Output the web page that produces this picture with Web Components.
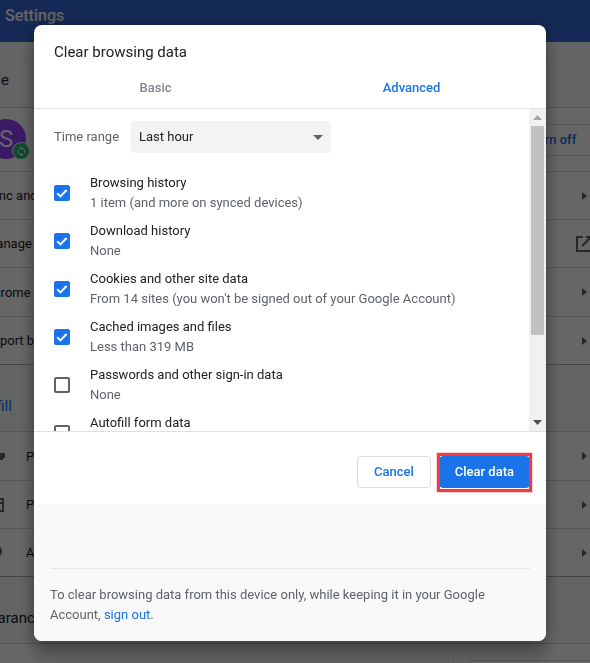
<!DOCTYPE html>
<html>
<head>
<meta charset="utf-8">
<title>Settings</title>
<style>
  html, body { margin: 0; height: 100%; overflow: hidden; background: #f8f9fa; }
  body { font-family: Roboto, "Liberation Sans", sans-serif; font-size: 13px; color: #202124; }
  .turn-off { display: block; width: 89px; padding-left: 16px; height: 30px; line-height: 30px; color: #1a73e8; font-weight: 500; border: 1px solid #dadce0; white-space: nowrap; }
</style>
</head>
<body>
<settings-page>
  <settings-heading style="height:65px">People</settings-heading>
  <settings-row tall>
    <user-avatar slot="icon"></user-avatar>
    <span slot="action" class="turn-off">Turn off</span>
  </settings-row>
  <settings-row arrow>Sync and Google services</settings-row>
  <settings-row external>Manage your Google Account</settings-row>
  <settings-row arrow style="height:49px">Chrome name and picture</settings-row>
  <settings-row arrow>Import bookmarks and settings</settings-row>
  <settings-heading section accent>Autofill</settings-heading>
  <settings-row arrow lead style="height:49px">
    <svg slot="icon" width="20" height="20" viewBox="0 0 20 20"><path fill="#5f6368" d="M11 7h8v5h-2v2h-3v-2h-3a4 4 0 1 1 0-5zM6 8a1.500 1.500 0 1 0 0 3 1.500 1.500 0 0 0 0-3z"/></svg>
    Passwords
  </settings-row>
  <settings-row arrow lead>
    <svg slot="icon" width="20" height="20" viewBox="0 0 20 20"><path fill="none" stroke="#5f6368" stroke-width="2" d="M2 4h15v12H2zM2 8h15"/></svg>
    Payment methods
  </settings-row>
  <settings-row arrow lead>
    <svg slot="icon" width="20" height="20" viewBox="0 0 20 20"><path fill="#5f6368" d="M10 2a6 6 0 0 1 6 6c0 4-6 10-6 10S4 12 4 8a6 6 0 0 1 6-6z"/></svg>
    Addresses and more
  </settings-row>
  <settings-heading section>Appearance</settings-heading>
  <settings-row theme>Theme</settings-row>
</settings-page>

<page-scrim>
  <clear-dialog>
    <span slot="title">Clear browsing data</span>
    <dialog-tab slot="tabs">Basic</dialog-tab>
    <dialog-tab slot="tabs" active>Advanced</dialog-tab>

    <time-range>Last hour</time-range>
    <check-item checked title-text="Browsing history" sub="1 item (and more on synced devices)"></check-item>
    <check-item checked title-text="Download history" sub="None"></check-item>
    <check-item checked title-text="Cookies and other site data" sub="From 14 sites (you won't be signed out of your Google Account)"></check-item>
    <check-item checked title-text="Cached images and files" sub="Less than 319 MB"></check-item>
    <check-item title-text="Passwords and other sign-in data" sub="None"></check-item>
    <check-item title-text="Autofill form data" sub="None"></check-item>

    <dialog-button slot="actions">Cancel</dialog-button>
    <dialog-button slot="actions" action highlighted>Clear data</dialog-button>

    <span slot="note">To clear browsing data from this device only, while keeping it in your Google Account, <a href="#" style="color:#1a73e8;text-decoration:none">sign out</a>.</span>
  </clear-dialog>
</page-scrim>

<script>
class SettingsPage extends HTMLElement{
    constructor(){
        super();
        this.attachShadow({ mode: 'open' });
        this.shadowRoot.innerHTML = `
            <style>
                :host { display: block; height: 663px; overflow: hidden; }
                .toolbar {
                    height: 42px;
                    background: #3367d6;
                    color: #fff;
                    font-size: 16px;
                    font-weight: 500;
                    line-height: 32px;
                    padding-left: 5px;
                    box-sizing: border-box;
                }
                .card {
                    width: 660px;
                    margin-left: -40px;
                    background: #f8f9fa;
                }
            </style>
            <div class="toolbar">Settings</div>
            <div class="card"><slot></slot></div>
        `;
    }
}
customElements.define("settings-page", SettingsPage);

class SettingsHeading extends HTMLElement{
    constructor(){
        super();
        this.attachShadow({ mode: 'open' });
        this.shadowRoot.innerHTML = `
            <style>
                :host {
                    display: flex;
                    align-items: center;
                    box-sizing: border-box;
                    padding: 11px 0 0 3px;
                    font-size: 15px;
                    color: #202124;
                    background: #f8f9fa;
                }
                :host([section]) {
                    height: 67px;
                    padding-top: 16px;
                    border-top: 1px solid #a9abad;
                }
                :host([accent]) { color: #1a73e8; padding-left: 5px; }
            </style>
            <slot></slot>
        `;
    }
}
customElements.define("settings-heading", SettingsHeading);

class SettingsRow extends HTMLElement{
    constructor(){
        super();
        this.attachShadow({ mode: 'open' });
        this.shadowRoot.innerHTML = `
            <style>
                :host {
                    display: flex;
                    align-items: center;
                    height: 48px;
                    box-sizing: border-box;
                    border-top: 1px solid #d3d4d6;
                    padding: 0 33px 0 25px;
                    font-size: 13px;
                    color: #202124;
                    position: relative;
                    background: #fff;
                }
                :host([tall]) { height: 64px; padding-left: 26px; padding-right: 0; }
                :host([lead]) { padding-left: 26px; }
                :host([theme]) .btn { display: block; }
                ::slotted([slot=icon]) { flex: none; margin-right: 20px; }
                .arrow {
                    display: none;
                    margin-left: auto;
                    width: 0;
                    height: 0;
                    border-left: 5px solid #5f6368;
                    border-top: 4.500px solid transparent;
                    border-bottom: 4.500px solid transparent;
                }
                :host([arrow]) .arrow { display: block; }
                .external { display: none; margin-left: auto; margin-right: -6px; }
                :host([external]) .external { display: block; }
                .action { margin-left: auto; }
                .btn {
                    display: none;
                    position: absolute;
                    left: 510px;
                    top: 16px;
                    width: 130px;
                    height: 32px;
                    border: 1px solid #dadce0;
                    border-radius: 4px;
                }
                .btn::before {
                    content: "";
                    position: absolute;
                    left: -18px;
                    top: -1px;
                    width: 1px;
                    height: 32px;
                    background: #dadce0;
                }
            </style>
            <slot name="icon"></slot>
            <slot></slot>
            <span class="action"><slot name="action"></slot></span>
            <span class="arrow"></span>
            <svg class="external" width="18" height="18" viewBox="0 0 18 18"><path fill="none" stroke="#5f6368" stroke-width="2" d="M8 2H2v14h14v-6M11 2h5v5M16 2L7 11"/></svg>
            <span class="btn"></span>
        `;
    }
}
customElements.define("settings-row", SettingsRow);

class UserAvatar extends HTMLElement{
    constructor(){
        super();
        this.attachShadow({ mode: 'open' });
        this.shadowRoot.innerHTML = `
            <style>
                :host {
                    display: block;
                    position: relative;
                    width: 40px;
                    height: 40px;
                    margin-top: -1px;
                    border-radius: 50%;
                    background: #9340ff;
                    color: #fff;
                    font-size: 24px;
                    line-height: 40px;
                    text-align: center;
                }
                .badge {
                    position: absolute;
                    left: 27px;
                    top: 24px;
                    width: 16px;
                    height: 16px;
                    border-radius: 50%;
                    box-shadow: 0 0 0 1px #fff;
                    background: #20c070;
                    display: flex;
                    align-items: center;
                    justify-content: center;
                }
            </style>
            <span>S</span>
            <span class="badge">
                <svg width="11" height="11" viewBox="0 0 24 24"><path fill="#fff" d="M12 4V1L8 5l4 4V6c3.300 0 6 2.700 6 6 0 1-.3 2-.7 2.800l1.500 1.500C19.500 15 20 13.600 20 12c0-4.400-3.600-8-8-8zm0 14c-3.300 0-6-2.700-6-6 0-1 .3-2 .7-2.800L5.200 7.700C4.500 9 4 10.400 4 12c0 4.400 3.600 8 8 8v3l4-4-4-4v3z"/></svg>
            </span>
        `;
    }
}
customElements.define("user-avatar", UserAvatar);

class PageScrim extends HTMLElement{
    constructor(){
        super();
        this.attachShadow({ mode: 'open' });
        this.shadowRoot.innerHTML = `
            <style>
                :host {
                    display: block;
                    position: fixed;
                    left: 0;
                    top: 0;
                    right: 0;
                    bottom: 0;
                    padding: 25px 0 0 34px;
                    background: rgba(0, 0, 0, .6);
                }
            </style>
            <slot></slot>
        `;
    }
}
customElements.define("page-scrim", PageScrim);

class ClearDialog extends HTMLElement{
    constructor(){
        super();
        this.attachShadow({ mode: 'open' });
        this.shadowRoot.innerHTML = `
            <style>
                :host {
                    display: flex;
                    flex-direction: column;
                    width: 512px;
                    height: 616px;
                    border-radius: 8px;
                    overflow: hidden;
                    background: #fff;
                    box-shadow: 0 0 16px rgba(0, 0, 0, .28), 0 16px 16px rgba(0, 0, 0, .24);
                }
                .title {
                    padding: 17px 20px 0;
                    height: 46px;
                    box-sizing: border-box;
                    font-size: 15px;
                    line-height: 20px;
                    color: #202124;
                }
                .tabs {
                    display: flex;
                    margin-left: -6.500px;
                    height: 37px;
                    flex: none;
                }
                .body {
                    display: flex;
                    height: 324px;
                    border-top: 1px solid #e0e0e0;
                    border-bottom: 1px solid #e0e0e0;
                    box-sizing: border-box;
                    flex: none;
                }
                .scroll {
                    flex: 1;
                    overflow: hidden;
                    padding: 12px 20px 0;
                }
                .bar {
                    flex: none;
                    width: 17px;
                    background: #f1f1f1;
                    display: flex;
                    flex-direction: column;
                    align-items: center;
                }
                .up, .down {
                    flex: none;
                    height: 17px;
                    display: flex;
                    align-items: center;
                    justify-content: center;
                }
                .up svg { fill: #a3a3a3; }
                .down svg { fill: #505050; }
                .track { flex: 1; width: 100%; }
                .thumb { width: 13px; height: 209px; margin: 0 auto; background: #c1c1c1; }
                .actions {
                    display: flex;
                    justify-content: flex-end;
                    gap: 8px;
                    height: 72px;
                    box-sizing: border-box;
                    padding: 24px 16px 0 0;
                    flex: none;
                }
                .note-wrap {
                    flex: 1;
                    background: #f9f9f9;
                    padding: 64px 16px 0;
                }
                .note {
                    border-top: 1px solid #e6e6e6;
                    padding-top: 16px;
                    font-size: 13px;
                    line-height: 20px;
                    color: #5f6368;
                }
            </style>
            <div class="title"><slot name="title"></slot></div>
            <div class="tabs"><slot name="tabs"></slot></div>
            <div class="body">
                <div class="scroll"><slot></slot></div>
                <div class="bar">
                    <div class="up"><svg width="9" height="5" viewBox="0 0 9 5"><path d="M4.500 0L9 5H0z"/></svg></div>
                    <div class="track"><div class="thumb"></div></div>
                    <div class="down"><svg width="9" height="5" viewBox="0 0 9 5"><path d="M0 0h9L4.500 5z"/></svg></div>
                </div>
            </div>
            <div class="actions"><slot name="actions"></slot></div>
            <div class="note-wrap"><div class="note"><slot name="note"></slot></div></div>
        `;
    }
}
customElements.define("clear-dialog", ClearDialog);

class DialogTab extends HTMLElement{
    constructor(){
        super();
        this.attachShadow({ mode: 'open' });
        this.shadowRoot.innerHTML = `
            <style>
                :host {
                    display: block;
                    width: 256px;
                    text-align: center;
                    font-size: 13px;
                    font-weight: 500;
                    line-height: 18px;
                    padding-top: 8px;
                    color: #80868b;
                }
                :host([active]) { color: #1a73e8; }
            </style>
            <slot></slot>
        `;
    }
}
customElements.define("dialog-tab", DialogTab);

class TimeRange extends HTMLElement{
    constructor(){
        super();
        this.attachShadow({ mode: 'open' });
        this.shadowRoot.innerHTML = `
            <style>
                :host {
                    display: flex;
                    align-items: center;
                    height: 32px;
                    margin-bottom: 16px;
                    font-size: 13px;
                }
                .label { width: 77px; color: #5f6368; margin-top: -1px; }
                .select {
                    display: flex;
                    align-items: center;
                    justify-content: space-between;
                    width: 200px;
                    height: 32px;
                    box-sizing: border-box;
                    padding: 0 8px 1px;
                    border-radius: 4px;
                    background: #f1f3f4;
                    color: #202124;
                }
            </style>
            <span class="label">Time range</span>
            <span class="select">
                <slot></slot>
                <svg width="10" height="5" viewBox="0 0 10 5" style="margin-top:1px"><path fill="#5f6368" d="M0 0h10L5 5z"/></svg>
            </span>
        `;
    }
}
customElements.define("time-range", TimeRange);

class CheckItem extends HTMLElement{
    constructor(){
        super();
        this.attachShadow({ mode: 'open' });
        this.shadowRoot.innerHTML = `
            <style>
                :host {
                    display: flex;
                    align-items: center;
                    height: 48px;
                    font-size: 13px;
                    line-height: 20px;
                }
                .box {
                    flex: none;
                    box-sizing: border-box;
                    width: 16px;
                    height: 16px;
                    margin-right: 20px;
                    border: 2px solid #5f6368;
                    border-radius: 2px;
                }
                .box svg { display: none; margin: -2px; }
                :host([checked]) .box { background: #1a73e8; border-color: #1a73e8; }
                :host([checked]) .box svg { display: block; }
                .title { color: #202124; }
                .sub { color: #5f6368; white-space: nowrap; }
            </style>
            <span class="box"><svg width="16" height="16" viewBox="0 0 16 16"><path fill="none" stroke="#fff" stroke-width="2" d="M3.200 8.200l3.200 3.200 6.200-6.400"/></svg></span>
            <span>
                <div class="title">${this.getAttribute("title-text") || ""}</div>
                <div class="sub">${this.getAttribute("sub") || ""}</div>
            </span>
        `;
    }
}
customElements.define("check-item", CheckItem);

class DialogButton extends HTMLElement{
    constructor(){
        super();
        this.attachShadow({ mode: 'open' });
        this.shadowRoot.innerHTML = `
            <style>
                :host {
                    display: block;
                    position: relative;
                    box-sizing: border-box;
                    height: 32px;
                    padding: 0 16px;
                    border: 1px solid #dadce0;
                    border-radius: 4px;
                    font-size: 13px;
                    font-weight: 500;
                    line-height: 30px;
                    color: #1a73e8;
                    background: #fff;
                }
                :host([action]) { background: #1a73e8; border-color: #1a73e8; color: #fff; padding: 0 15px; }
                .mark { display: none; }
                :host([highlighted]) .mark {
                    display: block;
                    position: absolute;
                    left: -3px;
                    top: -4px;
                    right: -3px;
                    bottom: -5px;
                    border: 3px solid #f23a40;
                    box-shadow: 0 0 0 .5px rgba(255, 110, 110, .6);
                }
            </style>
            <slot></slot>
            <span class="mark"></span>
        `;
    }
}
customElements.define("dialog-button", DialogButton);
</script>
</body>
</html>
